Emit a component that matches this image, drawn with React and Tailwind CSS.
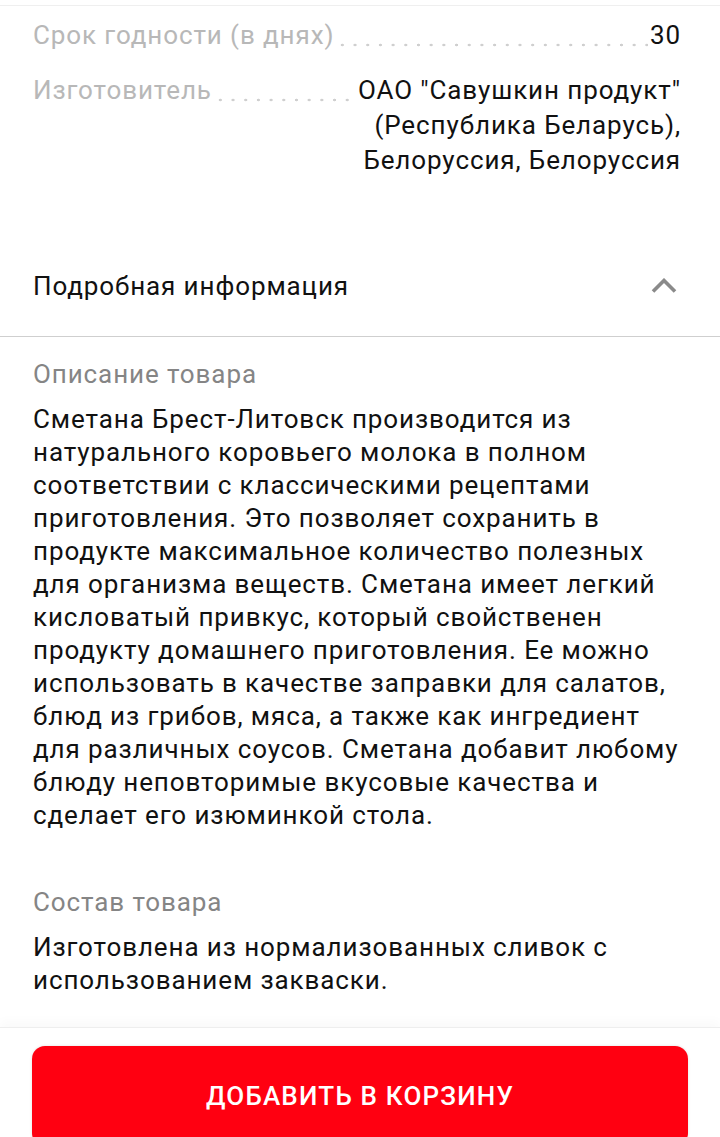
const specs = [
  { label: 'Срок годности (в днях)', value: ['30'] },
  {
    label: 'Изготовитель',
    value: ['ОАО "Савушкин продукт"', '(Республика Беларусь),', 'Белоруссия, Белоруссия'],
  },
];

const description =
  'Сметана Брест-Литовск производится из натурального коровьего молока в полном соответствии с классическими рецептами приготовления. Это позволяет сохранить в продукте максимальное количество полезных для организма веществ. Сметана имеет легкий кисловатый привкус, который свойственен продукту домашнего приготовления. Ее можно использовать в качестве заправки для салатов, блюд из грибов, мяса, а также как ингредиент для различных соусов. Сметана добавит любому блюду неповторимые вкусовые качества и сделает его изюминкой стола.';

const composition = 'Изготовлена из нормализованных сливок с использованием закваски.';

export default function App() {
  return (
    <div className="w-[720px] h-[1137px] overflow-hidden bg-white font-['Roboto',sans-serif] text-[26px] tracking-[0.9px] flex flex-col">
      <div className="h-[5px] shrink-0" />
      {/* характеристики */}
      <div className="border-t border-[#efefef] pl-[33px] pr-[39px] pt-[12px] flex flex-col gap-[20px]">
        {specs.map((s) => (
          <div key={s.label} className="flex items-start leading-[35px]">
            <span className="text-[#b8b8b8] whitespace-nowrap">{s.label}</span>
            <span className="flex-1 h-[35px] min-w-[20px] mx-[2px] bg-[radial-gradient(circle,#cfcfcf_1.2px,transparent_1.6px)] bg-[length:12.7px_4px] bg-repeat-x bg-[position:left_bottom_6px]" />
            <span className="text-[#111] text-right">
              {s.value.map((v) => (
                <span key={v} className="block">
                  {v}
                </span>
              ))}
            </span>
          </div>
        ))}
      </div>

      {/* Подробная информация */}
      <div className="mt-[59px] h-[100px] pl-[33px] pr-[43px] flex items-center justify-between border-b border-[#cfcfcf] shrink-0">
        <span className="text-[#111] leading-[33px]">Подробная информация</span>
        <svg width="26" height="16" viewBox="0 0 26 16" className="text-[#8a8a8a] mt-[-2px]">
          <polyline
            points="2,13.5 13,2.5 24,13.5"
            fill="none"
            stroke="currentColor"
            strokeWidth="3.6"
          />
        </svg>
      </div>

      <div className="px-[33px] pt-[21px] leading-[33px]">
        <div className="text-[#858585]">Описание товара</div>
        <p className="mt-[12px] text-[#111]">{description}</p>
        <div className="mt-[54px] text-[#858585]">Состав товара</div>
        <p className="mt-[12px] text-[#111]">{composition}</p>
      </div>

      {/* корзина */}
      <div className="mt-[30px] border-t border-[#eeeeee] shadow-[0_-6px_10px_rgba(0,0,0,0.025)] px-[32px] pt-[18px] shrink-0">
        <button className="w-full h-[100px] rounded-[13px] bg-[#ff0011] text-white font-medium text-[26px] tracking-[1.2px] shadow-[0_0_3px_rgba(0,0,0,0.12)]">
          ДОБАВИТЬ В КОРЗИНУ
        </button>
      </div>
    </div>
  );
}
